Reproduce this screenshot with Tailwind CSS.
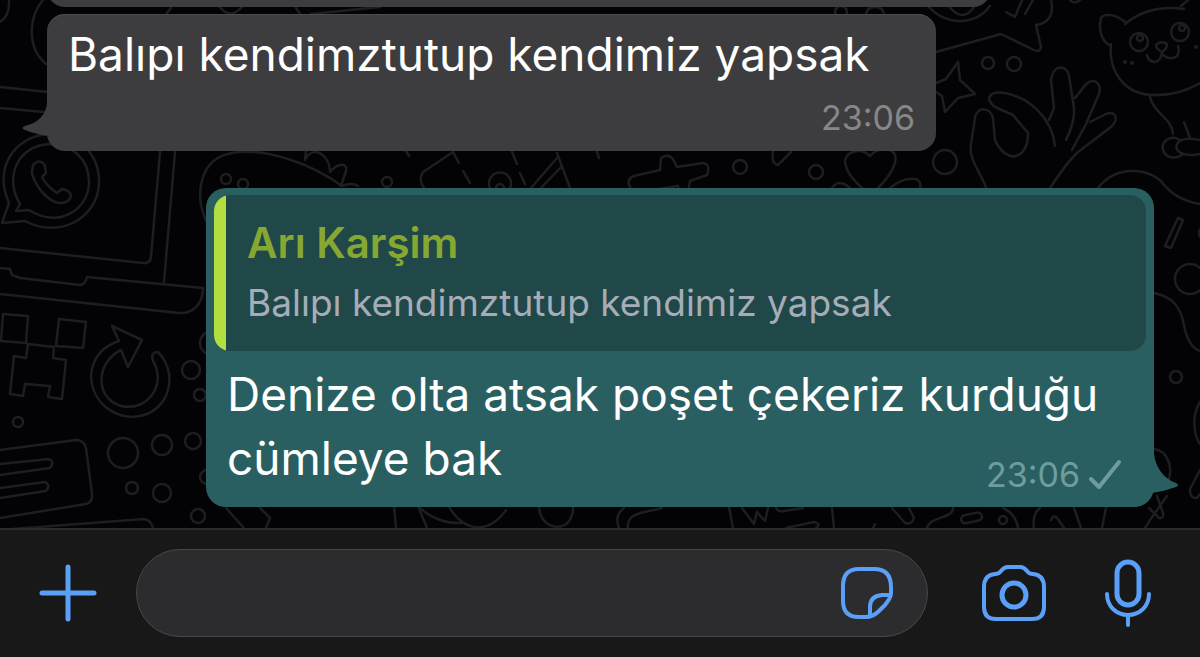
<!DOCTYPE html>
<html lang="tr">

<head>
  <meta charset="UTF-8" />
  <meta name="viewport" content="width=device-width, initial-scale=1.0" />
  <title>Sohbet</title>
  <script src="https://cdn.jsdelivr.net/npm/@tailwindcss/browser@4"></script>
</head>

<body class="flex h-screen flex-col overflow-hidden bg-[#030305] font-['Inter','Liberation_Sans',sans-serif] text-white">

  <!-- Messages -->
  <main class="relative flex-1 overflow-hidden">

    <!-- Doodle wallpaper -->
    <svg class="absolute inset-0 h-full w-full" viewBox="0 0 1200 528" preserveAspectRatio="xMinYMin slice" fill="none" stroke="#1e1e20" stroke-width="2.5" stroke-linecap="round" stroke-linejoin="round" aria-hidden="true">
      <!-- top left -->
      <path d="M0 22Q10 16 9 0M43 0C28 18 27 48 46 64M0 87L48 92M0 108L44 112" />
      <!-- laptop with phone badge -->
      <path d="M9 203L2 223L25 221C60 240 99 217 99 182C99 150 75 134 49 134C15 136 -7 167 9 203Z" />
      <path d="M20 204L16 211L29 210C58 229 89 210 89 182C89 158 71 144 49 144C17 146 4 178 20 204Z" />
      <path d="M34 164C38 160 43 161 45 166L46 173L42 177C45 183 51 189 57 193L62 189Q69 190 71 195C70 203 62 204 55 202C44 197 35 185 32 173Q32 167 34 164Z" />
      <path d="M160 152L151 257Q150 264 143 263L0 248M175 152L164 282M0 268L10 269L12 275L20 278L80 285Q85 285 87 277L203 288C203 304 193 314 179 313L0 294" />
      <!-- pixel face and refresh arrow -->
      <path d="M3 314L28 316L26 343L1 341ZM59 319L86 322L83 348L56 346ZM28 344L54 347L53 358L66 360L62 399L48 397L50 386L25 384L23 396L10 394L14 356L26 358Z" />
      <path d="M119 341L112 326L142 340L128 367L121 350C96 362 94 398 121 406C148 412 167 384 153 361Q150 352 158 352C176 370 173 402 147 414C120 424 92 405 91 376C92 358 103 346 119 341Z" />
      <circle cx="18" cy="422" r="5" />
      <!-- document card -->
      <path d="M0 450L76 440Q84 440 86 448L92 494Q93 502 86 504L0 518M0 464L49 459Q55 462 50 468L0 475M0 488L45 482Q51 485 46 491L0 498M0 530L144 519Q151 520 153 528" />
      <circle cx="123" cy="453" r="15" /><circle cx="162" cy="445" r="10" /><circle cx="193" cy="441" r="8" />
      <circle cx="132" cy="488" r="6" /><circle cx="162" cy="493" r="9" /><circle cx="198" cy="516" r="7" />
      <circle cx="191" cy="370" r="9" /><circle cx="200" cy="395" r="6" /><circle cx="212" cy="343" r="12" /><circle cx="207" cy="477" r="7" />
      <!-- dinosaur, map and plane between the bubbles -->
      <path d="M206 221C193 190 202 158 232 153C265 147 312 164 342 186Q352 182 358 186M305 160L306 151M306 158C315 145 330 156 330 172C338 162 350 162 345 174L341 186" />
      <circle cx="226" cy="179" r="5" /><circle cx="243" cy="184" r="5" /><circle cx="387" cy="182" r="5" />
      <path d="M453 152L423 172Q418 179 424 188M453 152L459 163M463 171L470 183M512 152L517 164M520 173L525 184M557 153L570 188M557 158L531 188M561 167L541 188M406 151L409 156M597 152L599 158" />
      <path d="M490 188A11 11 0 1 1 510 188M496 188A4 4 0 1 1 504 188" />
      <path d="M635 196L629 185Q627 179 634 176L660 170L661 158Q668 153 673 159L677 167L703 163Q711 164 707 175L690 181L688 192M634 193L678 186L680 194M773 152Q771 164 778 165L791 152" />
      <circle cx="740" cy="167" r="7" /><circle cx="816" cy="172" r="7" /><circle cx="945" cy="162" r="12" />
      <path d="M878 188C892 174 899 160 894 153C886 146 876 149 870 156C862 148 848 150 845 160C845 170 853 180 862 188M832 188Q839 178 850 188M890 188Q903 177 916 179Q922 182 920 188" />
      <!-- strip above the first bubble -->
      <path d="M171 8L166 14M220 7Q230 20 242 7M296 8L300 14M311 14L380 7" />
      <circle cx="841" cy="12" r="6" /><path d="M866 14Q867 7 875 7Q883 7 884 14" />
      <path d="M928 6C945 25 974 27 990 6M948 5Q962 24 974 7M1006 12L1015 17L1022 0M1025 14L1033 0M1051 0C1054 13 1050 23 1036 25L1041 47Q1040 53 1034 50L1001 34L936 52M1070 0Q1074 5 1080 0" />
      <circle cx="988" cy="63" r="6" /><circle cx="1014" cy="64" r="7" />
      <path d="M958 62L960 80L975 94L958 98L945 112L942 96L930 88M936 83L946 79L958 62" />
      <!-- hand -->
      <path d="M986 188C982 174 968 160 971 144L975 118C977 106 990 107 993 118L995 140C1000 152 1010 158 1016 156C1025 153 1028 143 1028 133L1013 115L995 107C984 98 990 91 1005 93C1030 98 1052 118 1055 146" />
      <path d="M1049 120L1054 108L1051 80C1053 64 1067 64 1069 76L1074 108C1075 120 1071 130 1066 140M1075 98L1086 84C1095 77 1102 84 1099 94L1086 124L1072 150M1090 122L1106 114C1116 110 1119 119 1111 127L1078 152C1066 163 1059 175 1050 188" />
      <!-- cat -->
      <path d="M1125 24C1142 10 1162 6 1184 9M1181 6L1188 0M1125 22C1116 14 1104 13 1101 18C1098 30 1102 41 1109 45M1111 44C1108 72 1125 94 1152 95Q1178 96 1200 83" />
      <circle cx="1139" cy="42" r="9" /><circle cx="1140" cy="38" r="3" /><circle cx="1180" cy="32" r="9" /><circle cx="1182" cy="28" r="3" />
      <path d="M1156 45Q1161 40 1167 44Q1167 49 1162 52Q1156 49 1156 45ZM1162 52Q1161 62 1154 62Q1148 61 1147 55M1163 55Q1170 61 1177 56Q1180 51 1178 46" />
      <path d="M1125 62V62.1M1132 63V63.1M1196 47V47.1" stroke-width="4" />
      <path d="M1150 97C1154 114 1172 118 1173 134M1184 122L1190 138M1180 140C1170 134 1161 142 1163 150C1166 159 1176 159 1182 155M1200 154C1184 157 1174 152 1177 144Q1181 136 1200 140" />
      <!-- right edge -->
      <path d="M1098 188C1115 166 1145 167 1161 181C1170 194 1182 201 1200 204M1178 218L1183 220L1171 248L1165 246Z M1154 293C1172 297 1180 305 1184 325Q1188 347 1200 351" />
      <circle cx="1190" cy="279" r="15" /><circle cx="1206" cy="233" r="7" /><circle cx="1176" cy="377" r="6" />
      <path d="M1200 402C1192 414 1193 434 1200 444M1200 470L1190 489Q1190 499 1197 498L1200 494M1154 449C1167 451 1174 466 1168 482M1149 508L1159 518Q1164 519 1163 513L1157 496M1167 496L1150 520L1145 528" />
      <!-- strip under the reply -->
      <path d="M226 508L244 528M260 508L270 518L266 528M394 506L396 528M418 506L427 528M420 508Q438 524 462 523M449 507C466 534 490 533 506 510M539 508C542 533 573 533 573 508M619 528Q614 515 624 508M628 528C626 512 645 513 662 508" />
      <path d="M729 507L733 528M742 508L754 524L757 512L765 521L768 508M776 508Q778 512 784 511L803 508M786 528L814 522Q822 524 816 528M832 508L834 528M892 508L905 523Q912 525 914 518L909 508M873 528L875 524M927 528C930 516 953 519 953 508M1003 508Q1016 514 1018 528M1034 528Q1032 514 1040 508M1051 520Q1054 512 1060 522L1064 528M1074 508L1081 528M1106 508L1102 528" />
      <rect x="961" y="514" width="21" height="8" rx="4" transform="rotate(-12 971 518)" /><circle cx="1003" cy="520" r="4" />
    </svg>

    <div class="relative flex flex-col">
      <!-- end of an earlier message -->
      <div class="-mt-[33px] ml-[47px] h-10 w-[944px] rounded-[18px] bg-[#3d3d3f]"></div>

      <!-- Received -->
      <article class="relative mt-[7px] ml-[47px] w-[889px] rounded-[18px] bg-[#3d3d3f] px-[21px] pt-2 pb-[13px] shadow-[inset_0_1px_0_#4b4b4d]">
        <svg class="absolute bottom-3 -left-[26px] h-10 w-7" viewBox="0 0 28 40" fill="#3d3d3f" aria-hidden="true">
          <path d="M26 0C27 14 18 24 4 27Q-1 29 4 31Q14 35 28 37V0Z" />
        </svg>
        <p class="text-[46px] leading-16 whitespace-nowrap">Balıpı kendimztutup kendimiz yapsak</p>
        <p class="mt-3 text-right text-[34px] leading-10 text-[#87878a]"><time>23:06</time></p>
      </article>

      <!-- Sent, with quote -->
      <article class="relative mt-[37px] mr-[46px] ml-auto w-[948px] rounded-[20px] bg-[#2a5f61] px-2 pt-[7px] pb-3">
        <svg class="absolute -right-[25px] bottom-3 h-[42px] w-7" viewBox="0 0 28 42" fill="#2a5f61" aria-hidden="true">
          <path d="M3 0C4 14 13 26 25 30Q29 32 25 34Q14 38 1 40H0V0Z" />
        </svg>
        <blockquote class="flex h-[156px] overflow-hidden rounded-[16px] bg-[#204848]">
          <div class="w-3 bg-[#b2de42]"></div>
          <div class="pt-[18px] pl-[21px] whitespace-nowrap">
            <p class="text-[42px] leading-[60px] font-semibold text-[#86a832]">Arı Karşim</p>
            <p class="text-[37px] leading-[60px] text-[#a5adb8]">Balıpı kendimztutup kendimiz yapsak</p>
          </div>
        </blockquote>
        <div class="flow-root px-[13px] pt-[11px] text-[46px] leading-16">
          Denize olta atsak poşet çekeriz kurduğu cümleye bak
          <span class="float-right mt-[29px] mr-[11px] flex items-center gap-2 text-[34px] leading-10 text-[#6f9d9f]">
            <time>23:06</time>
            <svg class="h-8 w-[34px]" viewBox="0 0 34 32" fill="none" stroke="currentColor" stroke-width="4" stroke-linecap="round" stroke-linejoin="round" role="img" aria-label="Gönderildi">
              <path d="M3 20L11 28L31 3" />
            </svg>
          </span>
        </div>
      </article>
    </div>
  </main>

  <!-- Composer -->
  <footer class="flex h-[129px] items-center gap-9 border-t-2 border-[#2a2a2c] bg-[#181818] pr-12 pb-[2px] pl-9 text-[#5aa0f8]">
    <button type="button" aria-label="Ekle">
      <svg class="h-16 w-16" viewBox="0 0 64 64" fill="none" stroke="currentColor" stroke-width="5" stroke-linecap="round">
        <path d="M32 6V58M6 32H58" />
      </svg>
    </button>

    <div class="flex h-[88px] flex-1 items-center rounded-full border border-[#48484a] bg-[#2c2c2e] pr-8 pl-9">
      <input type="text" aria-label="Mesaj" class="h-full min-w-0 flex-1 bg-transparent text-[36px] text-white outline-none" />
      <button type="button" aria-label="Çıkartmalar">
        <svg class="h-14 w-14" viewBox="0 0 56 56" fill="none" stroke="currentColor" stroke-width="4" stroke-linejoin="round">
          <path d="M20 4H35Q52 4 52 22V28C52 33 49 36 46 40L40 46C36 50 33 52 27 52H20Q4 52 4 36V21Q4 4 20 4Z" />
          <path d="M51 30H43Q31 31 31 42V51" />
        </svg>
      </button>
    </div>

    <button type="button" aria-label="Kamera" class="ml-4">
      <svg class="h-[60px] w-[68px]" viewBox="0 0 68 60" fill="none" stroke="currentColor" stroke-width="4" stroke-linejoin="round">
        <path d="M28 4H40Q44 4 47 8Q49 11 53 11Q64 12 64 24V44Q64 56 52 56H16Q4 56 4 44V24Q4 12 15 11Q19 11 21 8Q24 4 28 4Z" />
        <circle cx="34" cy="32" r="12" stroke-width="5" />
      </svg>
    </button>

    <button type="button" aria-label="Ses kaydı" class="ml-5">
      <svg class="h-[70px] w-12" viewBox="0 0 48 70" fill="none" stroke="currentColor" stroke-width="4" stroke-linecap="round">
        <rect x="13" y="4" width="22" height="43" rx="11" stroke-width="5" />
        <path d="M3 36C3 48 12 57 24 57C36 57 45 48 45 36M24 57V67" />
      </svg>
    </button>
  </footer>

</body>

</html>
